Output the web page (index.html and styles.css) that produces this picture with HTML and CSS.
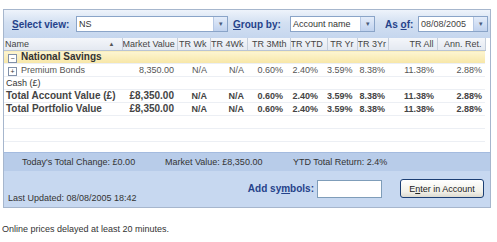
FILE: index.html
```html
<!DOCTYPE html>
<html lang="en">
<head>
  <meta charset="UTF-8" />
  <title>Portfolio - NS</title>
  <link rel="stylesheet" href="styles.css">
</head>
<body>
  <div class="portfolio">
    <div class="toolbar">
      <span class="tool-label label-view"><u>S</u>elect view:</span>
      <div class="combo combo-view"><span class="combo-text">NS</span><span class="combo-btn">&#9662;</span></div>
      <span class="tool-label label-group"><u>G</u>roup by:</span>
      <div class="combo combo-group"><span class="combo-text">Account name</span><span class="combo-btn">&#9662;</span></div>
      <span class="tool-label label-date">As <u>o</u>f:</span>
      <div class="combo combo-date"><span class="combo-text">08/08/2005</span><span class="combo-btn">&#9662;</span></div>
    </div>

    <div class="grid">
      <table class="holdings">
        <colgroup>
          <col class="c-name"><col class="c-mv"><col class="c-wk"><col class="c-4wk"><col class="c-3m">
          <col class="c-ytd"><col class="c-yr"><col class="c-3yr"><col class="c-all"><col class="c-ann">
        </colgroup>
        <thead>
          <tr>
            <th class="th-name">Name <span class="sort">&#9650;</span></th>
            <th>Market Value</th>
            <th>TR Wk</th>
            <th>TR 4Wk</th>
            <th>TR 3Mth</th>
            <th class="p-ytd">TR YTD</th>
            <th>TR Yr</th>
            <th>TR 3Yr</th>
            <th>TR All</th>
            <th>Ann. Ret.</th>
          </tr>
        </thead>
        <tbody>
          <tr class="group-row">
            <td colspan="10"><span class="toggle">&minus;</span>National Savings</td>
          </tr>
          <tr class="holding-row">
            <td><span class="toggle">+</span>Premium Bonds</td>
            <td>8,350.00</td><td>N/A</td><td>N/A</td><td class="p-3m">0.60%</td><td class="p-ytd">2.40%</td>
            <td class="p-yr">3.59%</td><td>8.38%</td><td>11.38%</td><td>2.88%</td>
          </tr>
          <tr class="plain-row">
            <td colspan="10">Cash (&pound;)</td>
          </tr>
          <tr class="total-row">
            <td class="big">Total Account Value (&pound;)</td>
            <td class="big">&pound;8,350.00</td><td>N/A</td><td>N/A</td><td class="p-3m">0.60%</td><td class="p-ytd">2.40%</td>
            <td class="p-yr">3.59%</td><td>8.38%</td><td>11.38%</td><td>2.88%</td>
          </tr>
          <tr class="total-row">
            <td class="big">Total Portfolio Value</td>
            <td class="big">&pound;8,350.00</td><td>N/A</td><td>N/A</td><td class="p-3m">0.60%</td><td class="p-ytd">2.40%</td>
            <td class="p-yr">3.59%</td><td>8.38%</td><td>11.38%</td><td>2.88%</td>
          </tr>
          <tr class="empty-row"><td colspan="10"></td></tr>
          <tr class="empty-row"><td colspan="10"></td></tr>
        </tbody>
      </table>
    </div>

    <div class="summary">
      <span class="sum-change">Today's Total Change: &pound;0.00</span>
      <span class="sum-value">Market Value: &pound;8,350.00</span>
      <span class="sum-return">YTD Total Return: 2.4%</span>
    </div>

    <div class="footer">
      <span class="updated">Last Updated: 08/08/2005 18:42</span>
      <div class="add-symbols">
        <span class="tool-label">Add sy<u>m</u>bols:</span>
        <span class="symbol-input"></span>
        <button class="enter-btn">E<u>n</u>ter in Account</button>
      </div>
    </div>
  </div>

  <p class="note">Online prices delayed at least 20 minutes.</p>
</body>
</html>
```

FILE: styles.css
```css
body {
  margin: 0;
  font-family: "Liberation Sans", Arial, sans-serif;
  font-size: 9px;
  color: #333;
  background: #fff;
}
.portfolio {
  margin: 9px 0 0 3px;
  width: 486px;
  border: 1px solid #a6b6cd;
}

/* toolbar */
.toolbar {
  display: flex;
  align-items: center;
  height: 28px;
  padding-left: 8px;
  background: linear-gradient(to bottom, #eef3fb, #d3e0f2 45%, #c5d6ee);
}
.tool-label {
  font-size: 10px;
  font-weight: bold;
  color: #25428a;
}
.label-view { width: 64px; }
.label-group { width: 57px; margin-left: 5px; }
.label-date { width: 33px; margin-left: 10px; }
.combo {
  display: flex;
  height: 16px;
  box-sizing: border-box;
  border: 1px solid #8aa4c8;
  background: #fff;
}
.combo-text {
  flex: 1;
  padding-left: 2px;
  line-height: 14px;
  color: #333;
}
.combo-date .combo-text { color: #444; }
.combo-btn {
  width: 13px;
  line-height: 14px;
  text-align: center;
  font-size: 7px;
  color: #4a5a78;
  background: linear-gradient(to bottom, #e3ecfa, #c0d2ee);
  border-left: 1px solid #b6c8e4;
}
.combo-view { width: 152px; }
.combo-group { width: 85px; }
.combo-date { width: 70px; }

/* grid */
.grid {
  height: 114px;
  background: #fff;
  overflow: hidden;
}
.holdings {
  width: 481px;
  table-layout: fixed;
  border-collapse: collapse;
}
.c-name { width: 118px; }
.c-mv { width: 55px; }
.c-wk { width: 33px; }
.c-4wk { width: 37px; }
.c-3m { width: 43px; }
.c-ytd { width: 37px; }
.c-yr { width: 30px; }
.c-3yr { width: 31px; }
.c-all { width: 49px; }
.c-ann { width: 48px; }
.holdings th,
.holdings td {
  height: 12px;
  padding: 0 3px 0 0;
  line-height: 12px;
  white-space: nowrap;
  overflow: hidden;
  text-align: right;
}
.holdings th {
  font-weight: normal;
  color: #444;
  background: linear-gradient(to bottom, #f4f6fa, #e4e9f1);
  border-right: 1px solid #c5cedb;
  border-bottom: 1px solid #b9c4d4;
}
.holdings th.th-name {
  text-align: left;
  padding-left: 1px;
}
.sort {
  float: right;
  margin-right: 4px;
  font-size: 6px;
  color: #555;
}
.holdings td:first-child {
  text-align: left;
  padding-left: 2px;
}
.holdings .p-3m { padding-right: 7px; }
.holdings .p-ytd { padding-right: 9px; }
.holdings .p-yr { padding-right: 5px; }
.holdings tbody td { border-bottom: 1px solid #eceff4; }
.holding-row td { color: #555; }
.group-row td {
  font-size: 10px;
  font-weight: bold;
  color: #333;
  background: linear-gradient(to bottom, #fdf5d2, #f7e6a6);
  border-bottom: 1px solid #e6d595;
}
.toggle {
  display: inline-block;
  width: 7px;
  height: 7px;
  margin: 0 4px 0 2px;
  border: 1px solid #8190a8;
  font-size: 7px;
  font-weight: normal;
  line-height: 7px;
  text-align: center;
  vertical-align: -1px;
  color: #333;
  background: #fff;
}
.total-row td {
  font-weight: bold;
  color: #444;
  border-top: 1px solid #b3b3b3;
  border-bottom: 1px solid #b3b3b3;
}
.total-row td.big { font-size: 10px; }

/* summary + footer */
.summary {
  display: flex;
  align-items: center;
  height: 18px;
  background: #b8cce9;
  border-top: 1px solid #a4bbdf;
}
.sum-change { margin-left: 18px; width: 143px; }
.sum-value { width: 128px; }
.footer {
  display: flex;
  justify-content: space-between;
  height: 36px;
  background: #c7d8f0;
}
.updated {
  align-self: flex-end;
  margin: 0 0 4px 4px;
}
.add-symbols {
  display: flex;
  align-items: center;
  margin: 8px 6px 0 0;
  height: 19px;
}
.symbol-input {
  width: 65px;
  height: 18px;
  box-sizing: border-box;
  margin: 0 18px 0 3px;
  border: 1px solid #7f9db9;
  background: #fff;
}
.enter-btn {
  width: 84px;
  height: 19px;
  padding: 0;
  font-family: "Liberation Sans", Arial, sans-serif;
  font-size: 9px;
  color: #222;
  border: 1px solid #1c3f74;
  border-radius: 3px;
  background: linear-gradient(to bottom, #ffffff, #f1f0e8 70%, #dcdad0);
}

.note {
  margin: 16px 0 0 2px;
  line-height: 11px;
}
```
